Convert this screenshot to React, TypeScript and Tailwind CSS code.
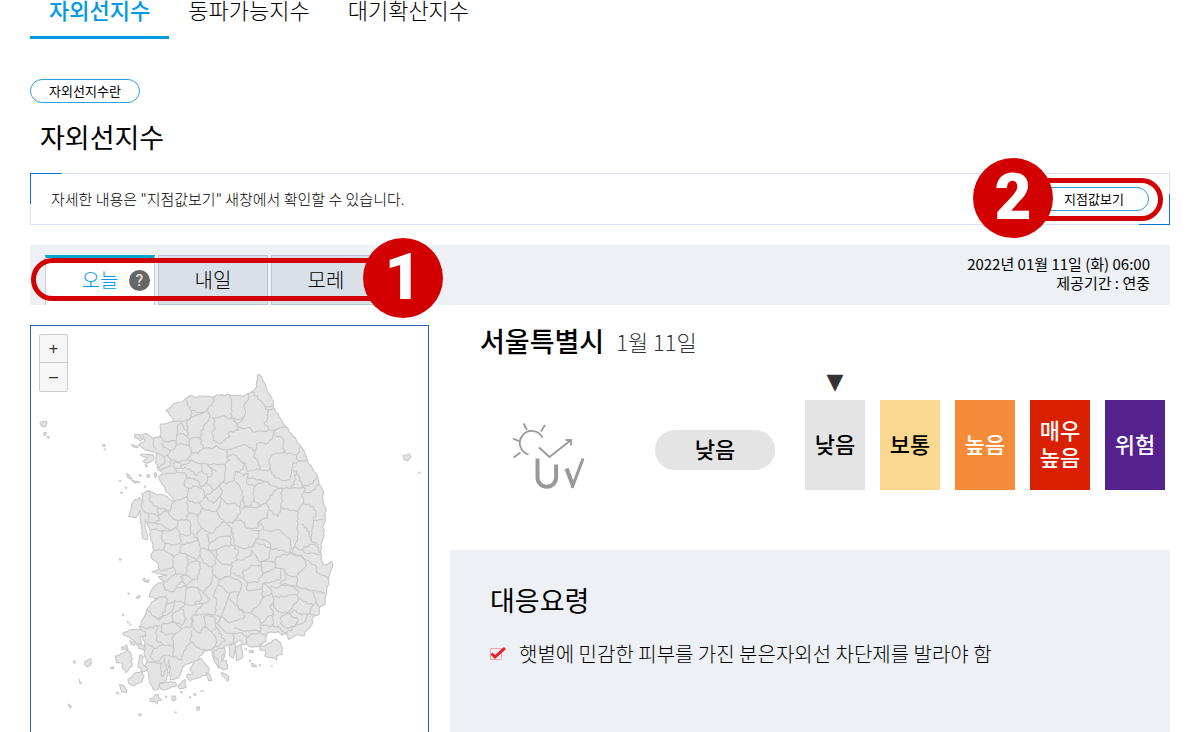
import { useState } from 'react';
import clsx from 'clsx';

const indexTabs = ['자외선지수', '동파가능지수', '대기확산지수'];
const dayTabs = ['오늘', '내일', '모레'];

const levels = [
  { label: '낮음', className: 'bg-[#e4e4e4] text-black' },
  { label: '보통', className: 'bg-[#fad88f] text-black' },
  { label: '높음', className: 'bg-[#f68c3a] text-white' },
  { label: '매우\n높음', className: 'bg-[#d92000] text-white' },
  { label: '위험', className: 'bg-[#54218d] text-white' },
];

// Map units: 3 per CSS pixel
const mainland =
  '688,163 697,178 708,203 722,228 730,245 735,270 752,296 770,322 790,350 812,378 826,402 832,424 848,446 862,466 868,492 879,512 879,545 888,572 886,595 880,615 882,645 874,670 872,700 876,725 882,735 892,733 905,724 908,735 898,760 896,785 890,815 886,830 884,855 868,862 866,885 850,890 845,915 825,935 822,948 800,945 790,950 775,958 768,940 755,945 745,935 735,938 722,936 710,944 708,965 695,972 685,980 665,982 650,972 638,974 632,960 620,968 608,970 595,975 582,980 585,1000 580,1018 568,1025 566,1045 558,1030 550,1012 545,990 530,992 520,997 500,1022 480,1030 465,1035 455,1050 446,1073 430,1079 420,1078 418,1020 410,1080 392,1088 385,1108 370,1110 360,1092 357,1060 345,1035 352,1026 342,1000 345,965 335,945 328,920 340,895 350,870 365,845 385,836 358,830 362,815 385,790 402,785 385,770 410,766 366,755 388,750 386,735 362,710 372,690 362,650 358,625 352,608 345,600 352,660 338,655 332,600 330,570 318,592 296,590 302,570 310,545 328,532 340,548 335,520 358,512 375,522 400,525 418,538 432,545 425,530 408,515 405,500 392,485 385,470 400,462 382,445 378,420 380,400 370,395 345,390 325,375 345,365 335,345 350,340 370,355 390,348 392,312 430,305 425,290 408,272 430,252 460,243 478,228 500,232 520,228 545,232 560,225 600,225 640,230 665,215 680,200 682,165';

const borders = [
  // north
  '470,240 480,262 484,285 478,300 455,306 430,305',
  '484,272 510,278 530,272 548,248 556,228',
  '530,272 540,290 552,296 575,288 604,296',
  '598,225 604,250 604,296 625,298 640,292',
  '655,222 650,245 642,262 646,284 640,292 622,318 640,326 660,322 668,336 700,334 716,328',
  '665,215 690,240 706,260 732,254',
  '706,260 708,270 733,266',
  '716,272 712,298 702,308 716,328 734,330 770,322',
  '552,296 550,312 558,325 545,338 550,362 572,370 600,350 595,338 625,330 622,318 610,296',
  '540,290 520,318 510,350 512,370 520,385 545,386 558,376',
  '558,376 575,388 590,392 610,384 645,374 676,392',
  '676,392 680,372 716,368 728,350 734,330',
  '728,345 752,348 762,362 758,384 765,398 800,404 812,380',
  '800,404 804,424 830,420',
  '676,392 672,412 684,426 690,450 712,454 722,440 716,420 732,402 765,398',
  '722,440 724,462 752,480 780,478 784,450 790,428 804,424',
  '784,450 800,452 808,480 818,500 848,492 862,470',
  '800,452 792,485 784,505 818,502',
  '478,300 500,284 520,278',
  '484,285 470,312 474,325 472,350 478,360 500,352 512,360',
  '455,306 442,320 440,345 438,362 400,366 390,348',
  '472,350 455,340 440,345',
  '455,310 466,330 474,325',
  '370,355 372,380 380,388',
  '392,370 400,382 420,392 436,382 438,362',
  '436,376 455,370 478,378 478,360',
  '478,378 484,395 505,402 520,385',
  '420,392 412,405 425,420 450,424 470,420 482,408 484,395',
  '380,400 400,410 412,405',
  '400,410 404,430 384,448',
  '425,420 420,440 404,445 390,452',
  '430,428 450,430 452,444 436,446 430,428',
  '452,436 470,432 482,420 470,420',
  '482,420 494,425 512,430 530,432 560,434 584,436',
  '512,430 516,452 500,466 480,446 452,444',
  '436,446 440,456 462,458 470,475 462,492 474,505',
  '404,462 425,460 440,456',
  '470,475 500,480 512,500 528,490 532,470 516,452',
  '530,432 545,445 546,468 532,470',
  '545,445 560,455',
  '584,436 585,460 580,485 570,492 550,512 544,500 528,490',
  '590,412 600,420 585,436',
  '590,392 590,412 612,404 625,416 645,430 640,446 616,455 614,480 590,492 580,485',
  '625,416 645,430 652,455 672,450 690,450',
  '616,455 640,466 655,460 652,472 680,480 705,484 730,498 756,504 784,505',
  '652,472 650,490 675,498 705,484',
  '675,498 668,520 672,540 660,560 642,560 640,530 630,500 614,486',
  '570,492 575,520 570,530 590,550 612,548 630,560 636,540 640,530',
  '672,540 690,556 710,548 730,516 756,504',
  '710,548 716,570 745,590 752,560 755,535 752,520 756,504',
  '752,560 780,572 803,575 820,550 818,520 826,506 818,500',
  '820,515 840,518 855,508 868,492',
  '820,550 850,560 858,580 850,600 880,600',
  '803,575 804,610 802,650 796,680 784,700',
  '716,570 712,595 690,602 700,630 720,635 745,628 765,645 782,660 782,698',
  '474,505 472,530 448,540 432,545',
  '474,505 500,498 520,510 524,530 508,548 478,545 472,530',
  '524,530 540,522 550,512',
  '524,530 550,550 570,530',
  '508,548 520,565 505,585 478,580 468,545',
  '520,565 545,575 560,572 575,545',
  '560,572 568,590 585,605 608,610 632,575 630,560',
  '608,610 612,600 640,605 645,622 680,625 690,602',
  '632,565 660,562 685,560 694,558',
  '358,512 360,545 384,565 420,572 432,545',
  '335,548 340,572 358,580 384,588 384,565',
  '358,580 355,608 375,608 390,600 384,588',
  '384,588 400,575 412,572 432,598 445,602 470,598 478,580',
  '505,585 504,605 515,625 540,640 556,630 575,608 585,605',
  '445,602 440,620 420,632 400,618 375,608',
  '470,598 482,610 485,640 470,648 450,642 440,620',
  '362,628 398,632 420,632',
  // centre
  '398,632 396,660 405,670 400,690 372,690',
  '450,642 454,665 430,675 405,670',
  '454,672 480,670 505,660 500,640 515,625',
  '485,640 505,660 512,685 536,690 540,670 530,645 540,640',
  '540,670 560,655 600,650 606,625 590,612',
  '536,690 560,688 580,680 604,675 600,650',
  '606,625 612,670 640,685 665,682 684,655 690,632 650,625',
  '684,655 720,668 722,685 755,690 782,698',
  '665,682 678,668 695,672 722,685 718,712 690,725 675,705 665,690',
  '604,675 625,690 620,720 600,735 575,732 560,718 560,688',
  '512,685 510,705 520,730 545,740 558,730 556,715 536,690',
  '454,672 450,695 430,712 400,690',
  '450,695 472,705 500,720 510,705',
  '430,712 428,740 438,762 465,765 474,735 472,705',
  '388,750 410,752 430,738',
  '474,735 500,722 512,728 508,760 502,780 490,778 465,765',
  '402,785 425,768 438,762',
  '465,765 452,770 460,785 470,800 490,780',
  '438,800 452,785 460,785',
  '545,740 550,762 570,778 600,768 608,738 600,735',
  '500,802 520,820 535,800 545,785 550,762',
  '570,778 600,768 625,780 635,795 630,815 600,820 565,795 570,778',
  '608,760 640,775 640,752 665,735 695,740 692,725 735,728 740,710 784,700',
  '640,775 650,785 680,788 698,765 695,740',
  '665,690 665,705 640,720 620,720',
  '735,728 735,742 720,752 698,765',
  '735,742 755,745 765,755 785,770 800,772 828,738 825,722 810,708 784,700',
  '784,700 808,705 840,728 855,735 865,760 890,770 896,778',
  '815,690 835,700 872,704',
  '796,680 810,690 845,672 865,682 872,700',
  '812,612 832,625 845,665 865,675',
  '850,600 846,640 845,665',
  '800,772 802,800 830,806 848,812 886,818',
  '755,745 750,780 725,785 698,790 695,805 650,810 650,785',
  '765,755 765,780 750,790 780,798 802,800',
  '698,790 720,805 725,820 700,832 695,805',
  '720,800 740,805 760,795 782,798 806,812 800,825 770,828 730,832 725,820',
  '630,815 622,840 625,860 640,875 660,878 690,850 700,832',
  '730,832 732,860 745,875 775,878 790,855 806,835 800,825',
  '806,835 820,845 850,855 858,845 850,820 848,812',
  '858,845 868,862',
  '850,855 840,880 815,885 790,870 780,880',
  // south
  '402,785 405,810 430,815 445,802 470,800 468,825 465,850 435,842 410,850 408,830 380,835',
  '470,800 500,802 512,825 515,838 485,856 465,850',
  '520,820 540,838 525,850 495,855',
  '565,795 550,830 560,840 555,885 530,882 490,885 520,850',
  '600,820 575,890 560,885',
  '600,835 610,848 640,880 645,890 620,902 598,910 575,890',
  '410,850 405,875 385,900 350,868',
  '435,842 430,868 410,885 385,900',
  '465,850 450,865 428,880 430,905 455,915 468,895 460,870 450,865',
  '490,885 484,920 455,925 430,905 400,910 392,935 412,945 440,938 455,925',
  '520,890 535,882 555,895 560,925 545,935 525,920 520,890',
  '484,890 490,925 510,940 525,920',
  '328,920 355,925 390,915',
  '380,925 378,960 400,975 430,980 428,950 440,938',
  '484,932 482,965 515,990 545,988 560,965 548,940 545,935',
  '575,890 560,910 590,940 608,940 610,968',
  '560,925 585,965 560,980 545,988',
  '610,925 650,932 690,935 692,910 680,890 660,878',
  '612,940 635,938 652,950 650,972',
  '652,950 690,935 708,950',
  '692,910 730,880 720,860 732,850',
  '692,910 720,922 728,915 730,880',
  '750,895 772,880 805,900 800,915 775,925 752,910 750,895',
  '728,915 750,925 770,940 800,912 825,905 835,880 855,885',
  '350,970 372,985 400,975',
  '372,985 360,1010 380,1025 408,1005 430,1010 432,990 430,980',
  '430,1010 455,1020 460,995 482,968',
  '395,1030 396,1070 408,1050 404,1015',
  '352,1026 380,1030 395,1030',
];

const islands = [
  '30,308 50,304 50,312 45,320 34,318',
  '42,338 49,338 47,346 41,345',
  '52,350 58,351 56,355 52,353',
  '218,374 225,374 224,380 218,378',
  '222,388 226,387 225,390',
  '1120,406 1138,402 1143,410 1134,422 1122,418',
  '1167,456 1169,456 1169,460 1167,459',
  '314,344 330,344 332,352 340,356 330,362 322,354 314,354',
  '304,374 315,376 325,382 310,380',
  '332,402 352,404 370,406 372,418 350,430 338,424 352,414 332,406',
  '345,434 352,436 349,442',
  '290,460 300,468 306,478 294,474',
  '304,480 315,484 330,488 316,490',
  '268,482 272,482 271,485',
  '285,502 290,502 288,506',
  '272,516 277,517 274,521',
  '326,464 334,466 333,470',
  '352,464 360,466 356,472 350,470',
  '372,460 378,458 380,466 376,474',
  '343,498 347,500 346,503',
  '268,716 274,718 270,721',
  '338,777 345,775 348,781 358,781 354,787 344,784',
  '318,832 330,826 330,832 322,836',
  '294,819 298,820 296,823',
  '277,882 282,884 279,888',
  '292,904 296,906 294,909',
  '299,912 302,912 301,916',
  '278,940 300,930 330,928 346,934 346,948 330,950 335,968 322,976 310,960 296,950 280,944',
  '300,962 316,966 314,976 302,972',
  '326,972 344,978 340,990 326,986',
  '274,982 290,975 294,988 278,990',
  '256,1008 272,1002 292,990 304,1002 306,1040 298,1042 288,1058 276,1042 278,1030 260,1028',
  '330,1004 340,1010 338,1032 354,1048 340,1056 324,1040',
  '294,1078 318,1058 336,1055 342,1068 336,1085 312,1097 296,1090',
  '130,1024 136,1024 134,1030',
  '164,1026 182,1016 182,1034 172,1040 164,1034',
  '242,1042 250,1040 250,1046 243,1046',
  '148,1078 150,1088 154,1088 153,1091 149,1089',
  '115,1152 124,1160 122,1164 116,1158',
  '268,1094 284,1100 290,1118 276,1116',
  '258,1120 266,1116 264,1122',
  '360,1136 370,1134 376,1124 386,1124 386,1134 396,1140 384,1142 380,1152 374,1144 362,1144',
  '388,1090 408,1086 436,1086 440,1096 420,1104 404,1110 390,1104',
  '444,1098 458,1084 466,1078 468,1102 448,1106',
  '426,1128 436,1128 438,1138 430,1143 425,1138',
  '406,1128 410,1130 408,1134',
  '325,1182 334,1184 331,1188',
  '434,1176 440,1176 438,1179',
  '500,1162 508,1160 509,1168 502,1172',
  '452,1114 456,1116 454,1120',
  '490,1124 496,1120 497,1126',
  '512,1114 521,1112 516,1114',
  '478,1132 482,1130 482,1133',
  '472,1062 490,1062 480,1046 492,1026 512,1016 522,1026 538,1048 528,1066 504,1074 480,1082 470,1072',
  '528,1058 538,1062 546,1082 536,1082',
  '552,990 582,982 586,998 574,1010 576,1022 590,1020 592,1046 580,1050 566,1040 564,1018 552,1012',
  '574,1058 590,1064 596,1070 592,1084 586,1074 576,1066',
  '598,976 614,970 616,986 610,1014 598,1008',
  '616,984 634,974 638,1012 620,1022',
  '644,988 650,986 648,990',
  '658,992 670,992 670,998 660,998',
  '690,972 702,980 708,974 738,958 752,968 758,984 756,1004 740,1008 740,1020 730,1012 714,1012 704,1008 708,992 690,990',
  '664,1030 672,1032 680,1040 666,1040',
  '658,1020 662,1022 660,1026',
  '724,1038 727,1038 726,1040',
  '688,1034 692,1035 690,1037',
];

// Breaks every segment into short uneven steps, so that borders look surveyed
const roughen = (points: string, strength: number) => {
  const pts = points.split(' ').map((pair) => pair.split(',').map(Number));
  const out: string[] = [];
  pts.forEach(([x, y], i) => {
    out.push(`${x},${y}`);
    const next = pts[i + 1];
    if (!next) return;
    const dx = next[0] - x;
    const dy = next[1] - y;
    const len = Math.hypot(dx, dy);
    const steps = Math.floor(len / 7);
    for (let s = 1; s < steps; s += 1) {
      const t = s / steps;
      const wave = Math.sin((x + dx * t) * 12.9 + (y + dy * t) * 78.2) * strength;
      out.push(
        `${Math.round(x + dx * t - (dy / len) * wave)},${Math.round(y + dy * t + (dx / len) * wave)}`
      );
    }
  });
  return out.join(' ');
};

const KoreaMap = () => (
  <svg
    viewBox="3 18 1191 1221"
    className="block w-full"
    fill="#e4e4e4"
    stroke="#c9c9c9"
    strokeWidth="3.500"
    strokeLinejoin="round"
    role="img"
    aria-label="자외선지수 지도"
  >
    <polygon points={roughen(mainland, 2)} />
    {borders.map((line) => (
      <polyline key={line} points={roughen(line, 3)} fill="none" />
    ))}
    {islands.map((island) => (
      <polygon key={island} points={roughen(island, 2)} />
    ))}
  </svg>
);

const UvIcon = () => (
  <svg
    viewBox="0 -5 100 90"
    className="h-[90px] w-[100px]"
    fill="none"
    stroke="#999"
    strokeWidth="1.800"
    aria-hidden="true"
  >
    <path d="M28.500 44.500A12 12 0 1 1 42.500 27.500" />
    <path d="M23.500 13.500l3.500 6.500M45 15l-4 6.500M13 28.500l7 3M13.500 47.500l7-5M39 37.500l10.500 9.500L71 30M65.500 30H71v5.500" />
    <path d="M37.500 48.500v19a9.300 9.300 0 0 0 18.600 0V54.500" strokeWidth="4" />
    <path d="M66.500 58.500l6.500 17" strokeWidth="4.200" />
    <path d="M72 78L83 48.500" strokeWidth="3" />
  </svg>
);

const CheckMark = () => (
  <svg viewBox="1 0 17 16" className="h-4 w-[17px] shrink-0" fill="none" aria-hidden="true">
    <path d="M1.500 2.500h11v11h-11z" stroke="#f5a3ab" />
    <path d="M2.500 7.500l3.500 3.500 10-9" stroke="#ee1c25" strokeWidth="3" />
  </svg>
);

const Badge = ({ value, className }: { value: number; className: string }) => (
  <span
    className={clsx(
      'absolute flex size-20 items-center justify-center rounded-full bg-[#d20000] font-[Roboto] text-[64px] leading-none font-black text-white',
      className
    )}
  >
    {value}
  </span>
);

export default function App() {
  const [indexTab, setIndexTab] = useState(indexTabs[0]);
  const [day, setDay] = useState(dayTabs[0]);

  return (
    <div className="h-screen overflow-hidden bg-white px-[30px] font-['Noto_Sans_CJK_KR',sans-serif] font-light text-black">
      <nav className="flex h-[39px]">
        {indexTabs.map((tab) => (
          <button
            key={tab}
            onClick={() => setIndexTab(tab)}
            className={clsx(
              'border-b-3 px-[19px] pb-[18px] text-[22px] leading-[18px] whitespace-nowrap',
              tab === indexTab
                ? 'border-[#0099e5] font-medium text-[#0099e5]'
                : 'border-transparent'
            )}
          >
            {tab}
          </button>
        ))}
      </nav>

      <button className="mt-10 block h-6 w-[110px] rounded-full border border-[#2f9fe0] text-[13px] leading-5 font-normal">
        자외선지수란
      </button>
      <h1 className="mt-4 pl-2.5 text-[27px] leading-9 font-normal">자외선지수</h1>

      <div className="relative mt-[18px] flex h-[52px] items-center justify-between border border-[#d6dff5] px-5">
        <span className="absolute -top-px -left-px size-[31px] border-t border-l border-[#0a70dc]" />
        <span className="absolute -right-px -bottom-px size-[31px] border-r border-b border-[#0a70dc]" />
        <p className="text-[15px]">자세한 내용은 "지점값보기" 새창에서 확인할 수 있습니다.</p>
        <button className="h-6 w-[110px] rounded-full border border-[#2f9fe0] text-[13px] leading-5 font-normal">
          지점값보기
        </button>
        <span className="absolute top-1 right-1.5 h-[43px] w-[158px] rounded-full border-5 border-[#d20000]" />
        <Badge value={2} className="right-[116px] -top-4" />
      </div>

      <div className="relative mt-5 flex h-[60px] items-end justify-between bg-[#edf1f6] pr-5 pl-[15px]">
        <div className="flex gap-[3px]">
          {dayTabs.map((tab) => (
            <button
              key={tab}
              onClick={() => setDay(tab)}
              className={clsx(
                'relative h-[50px] w-[110px] border-x text-[20px]',
                tab === day
                  ? 'border-t-3 border-x-[#c5ccd6] border-t-[#00a6d0] bg-white pb-1 text-[#0099e5]'
                  : 'border-y border-[#b9c2ce] bg-[#dae0e8]'
              )}
            >
              {tab}
              {tab === day && (
                <span className="absolute top-3 right-1 flex size-[21px] items-center justify-center rounded-full bg-[#666] font-[Roboto] text-base font-medium text-[#ddd]">
                  ?
                </span>
              )}
            </button>
          ))}
        </div>
        <div className="self-start pt-[9px] text-right text-[15px] leading-[19px] font-normal">
          <p>2022년 01월 11일 (화) 06:00</p>
          <p>제공기간 : 연중</p>
        </div>
        <span className="absolute top-[13px] left-px h-[43px] w-[360px] rounded-full border-5 border-[#d20000]" />
        <Badge value={1} className="-top-[7px] left-[333px]" />
      </div>

      <main className="mt-5 grid grid-cols-[399px_minmax(0,1fr)] gap-[21px]">
        <section className="relative border border-[#2f5cb3]">
          <KoreaMap />
          <div className="absolute top-2 left-2 flex flex-col divide-y divide-[#ccc] rounded-xs border border-[#ccc] bg-[#f6f6f6] font-['Liberation_Sans'] text-base font-normal text-[#333]">
            <button className="h-7 w-[27px]" title="확대">+</button>
            <button className="h-7 w-[27px]" title="축소">–</button>
          </div>
        </section>

        <section className="flex flex-col">
          <h2 className="flex items-center gap-3 pl-[30px] text-[27px] leading-8 font-medium">
            서울특별시
            <span className="text-[22px] font-light text-[#333]">1월 11일</span>
          </h2>

          <div className="mt-[43px] flex items-start justify-between pr-[5px] pl-[50px]">
            <div className="flex items-center gap-[55px] pt-[5px]">
              <UvIcon />
              <span className="flex h-10 w-[120px] items-center justify-center rounded-full bg-[#e4e4e4] pb-1 text-[22px] font-medium">
                낮음
              </span>
            </div>
            <ul className="flex gap-[15px]">
              {levels.map((level, i) => (
                <li
                  key={level.label}
                  className={clsx(
                    'relative flex h-[90px] w-[60px] items-center justify-center pb-1 text-[22px] leading-[27px] font-medium whitespace-pre-line',
                    level.className
                  )}
                >
                  {i === 0 && (
                    <span className="absolute -top-8 font-['DejaVu_Sans'] text-[22px] text-[#333]">
                      ▼
                    </span>
                  )}
                  {level.label}
                </li>
              ))}
            </ul>
          </div>

          <div className="mt-[55px] flex-1 bg-[#edf1f6] px-10 pt-8 pb-10">
            <h3 className="text-[27px] leading-9 font-normal">대응요령</h3>
            <ul className="mt-[22px]">
              <li className="flex items-center gap-3 text-[20px] leading-7">
                <CheckMark />
                햇볕에 민감한 피부를 가진 분은자외선 차단제를 발라야 함
              </li>
            </ul>
          </div>
        </section>
      </main>
    </div>
  );
}
